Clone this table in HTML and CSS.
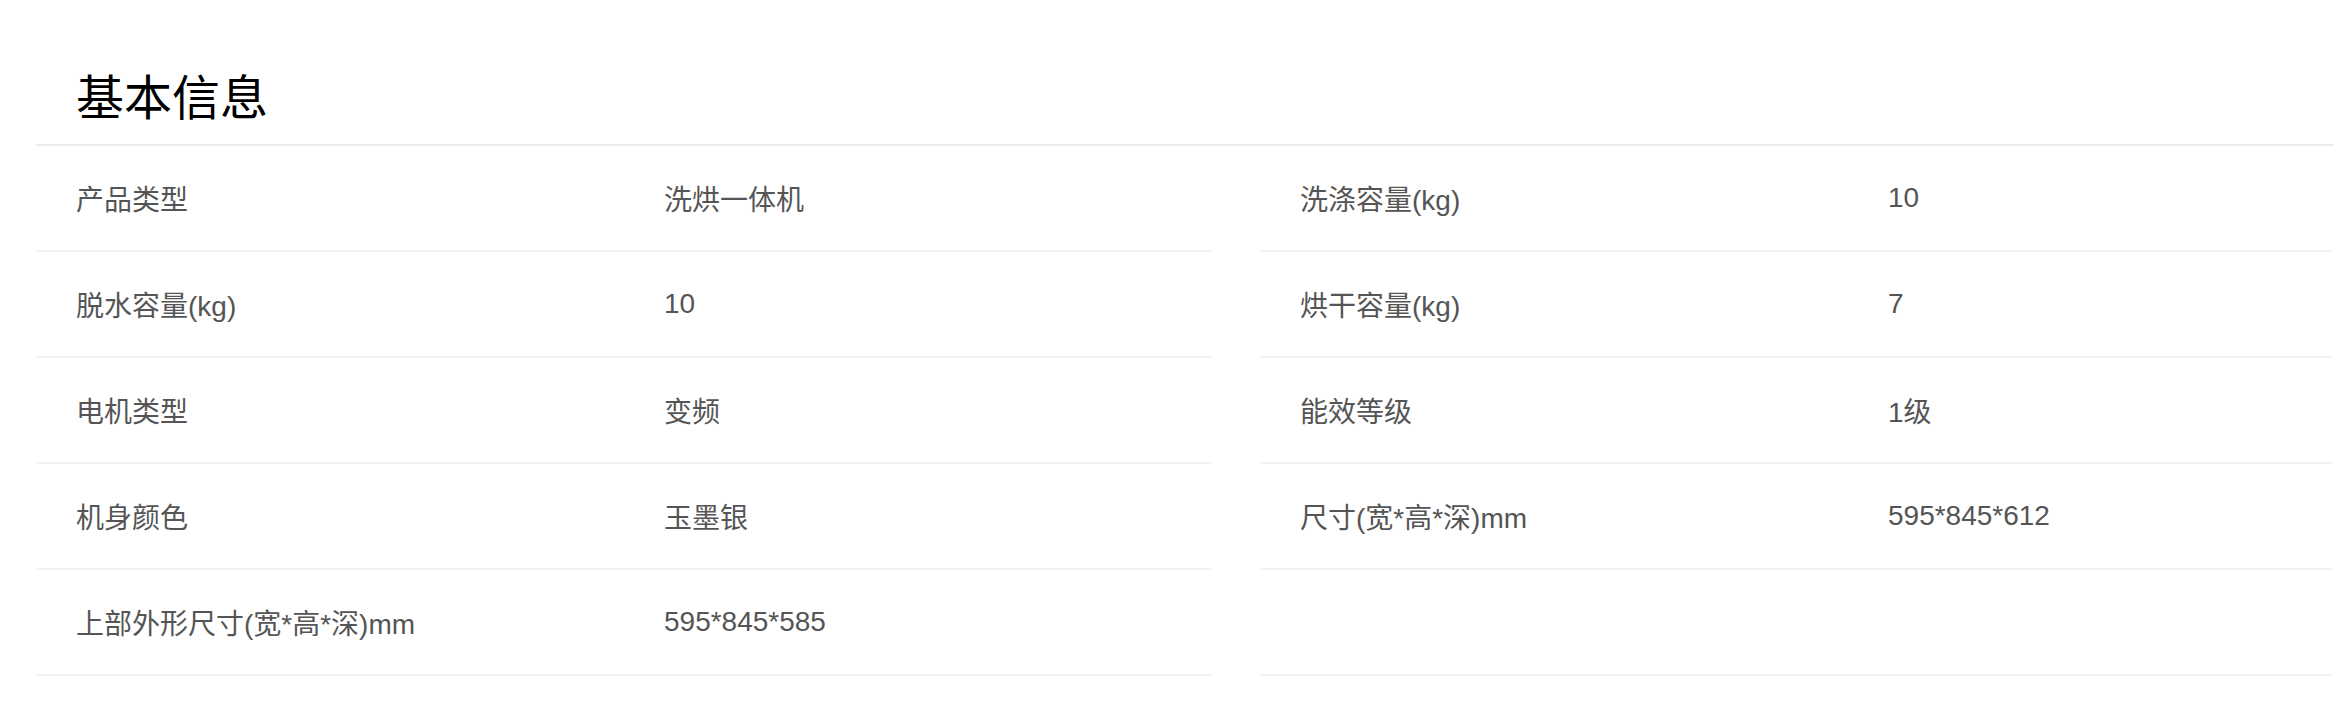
FILE: index.html
```html
<!DOCTYPE html>
<html lang="zh-CN">
<head>
<meta charset="utf-8">
<title>基本信息</title>
<link rel="stylesheet" href="styles.css">
</head>
<body>
<section class="spec">
  <h2 class="spec-title">基本信息</h2>
  <div class="spec-grid">
    <div class="spec-item"><span class="spec-label">产品类型</span><span class="spec-value">洗烘一体机</span></div>
    <div class="spec-item"><span class="spec-label">洗涤容量(kg)</span><span class="spec-value">10</span></div>
    <div class="spec-item"><span class="spec-label">脱水容量(kg)</span><span class="spec-value">10</span></div>
    <div class="spec-item"><span class="spec-label">烘干容量(kg)</span><span class="spec-value">7</span></div>
    <div class="spec-item"><span class="spec-label">电机类型</span><span class="spec-value">变频</span></div>
    <div class="spec-item"><span class="spec-label">能效等级</span><span class="spec-value">1级</span></div>
    <div class="spec-item"><span class="spec-label">机身颜色</span><span class="spec-value">玉墨银</span></div>
    <div class="spec-item"><span class="spec-label">尺寸(宽*高*深)mm</span><span class="spec-value">595*845*612</span></div>
    <div class="spec-item"><span class="spec-label">上部外形尺寸(宽*高*深)mm</span><span class="spec-value">595*845*585</span></div>
    <div class="spec-item"></div>
  </div>
</section>
</body>
</html>
```

FILE: styles.css
```css
html, body {
  margin: 0;
  padding: 0;
  background: #ffffff;
  overflow-x: hidden;
}

body {
  font-family: "Liberation Sans", "Noto Sans CJK SC", sans-serif;
}

.spec {
  margin-left: 36px;
  width: 2400px;
}

.spec-title {
  margin: 0;
  padding: 70px 0 26px 40px;
  font-family: "Noto Sans CJK SC", sans-serif;
  font-size: 48px;
  line-height: 48px;
  font-weight: 400;
  color: #000000;
  border-bottom: 2px solid #ececec;
}

.spec-grid {
  display: grid;
  grid-template-columns: 1176px 1176px;
  column-gap: 48px;
}

.spec-item {
  display: flex;
  align-items: center;
  height: 104px;
  padding-left: 40px;
  border-bottom: 2px solid #f3f3f3;
  font-size: 28px;
  color: #555555;
}

.spec-label {
  flex: 0 0 588px;
}

.spec-value {
  flex: 1 1 auto;
}
```
